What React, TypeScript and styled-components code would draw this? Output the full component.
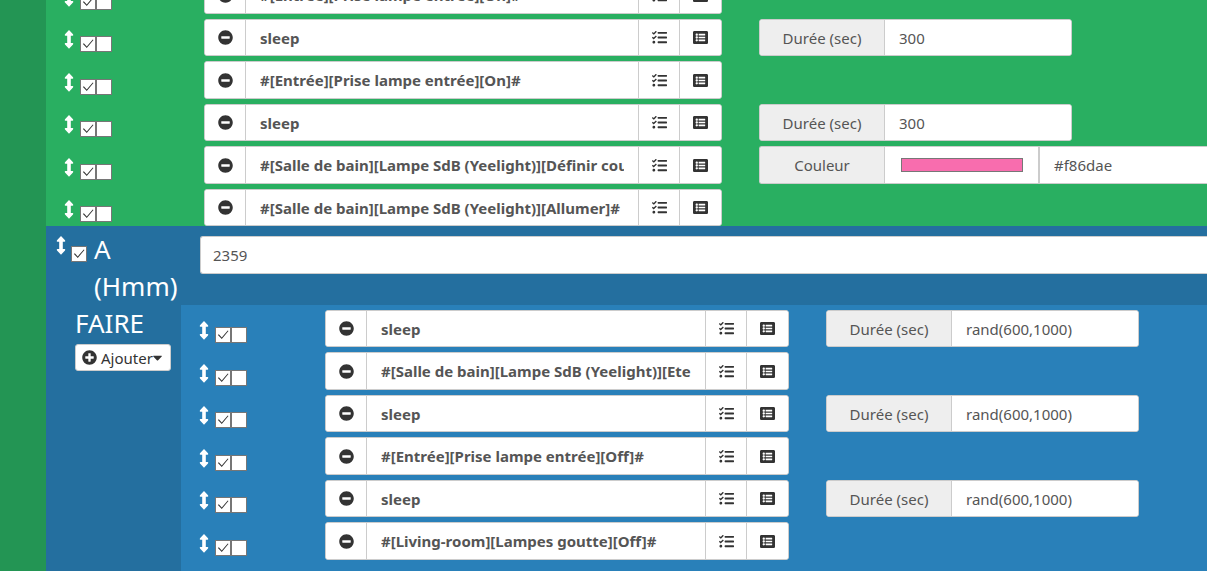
import React from "react";
import styled, { createGlobalStyle, css } from "styled-components";
import { FaCaretDown, FaListAlt, FaMinusCircle, FaPlusCircle, FaTasks } from "react-icons/fa";

const GlobalStyle = createGlobalStyle`
  *, *::before, *::after { box-sizing: border-box; }
  body {
    margin: 0;
    font-family: "Noto Sans", "Open Sans", sans-serif;
    font-size: 15px;
    line-height: 20px;
    color: #555;
  }
  button, input { font: inherit; color: inherit; margin: 0; }
`;

const Page = styled.main`
  display: flex;
  min-height: 100vh;
  padding-left: 46px;
  overflow: hidden;
  background: #239554;
`;

const Scenario = styled.div`
  flex: 1;
  min-width: 0;
  display: flex;
  flex-direction: column;
`;

const ActionList = styled.section<{ $tone: "green" | "blue" }>`
  display: flex;
  flex-direction: column;
  gap: 5px;
  background: ${(p) => (p.$tone === "green" ? "#29af61" : "#2980b9")};
  padding-left: 18px;
  ${(p) =>
    p.$tone === "green"
      ? css`
          margin-top: -24px;
        `
      : css`
          flex: 1;
          min-width: 0;
          padding-top: 5px;
          padding-bottom: 11px;
        `}
`;

const Row = styled.div<{ $tone: "green" | "blue" }>`
  display: grid;
  grid-template-columns: ${(p) =>
    p.$tone === "green"
      ? "103px minmax(0, 518fr) minmax(0, 448fr)"
      : "89px minmax(0, 464fr) minmax(0, 381fr)"};
  column-gap: 37px;
  height: 37px;

  ${(p) => (p.$tone === "green" ? "&:nth-child(odd)" : "&:nth-child(even)")} {
    height: 38px;
  }
`;

const RowControls = styled.div`
  display: flex;
  align-items: flex-end;
  padding-bottom: 4px;
`;

const HandleIcon = styled.svg`
  display: block;
  flex: none;
  width: 10px;
  height: 19px;
  margin-bottom: 3px;
  fill: #fff;
`;

const Checks = styled.div`
  display: flex;
  padding-left: 6px;
`;

const Check = styled.input.attrs({ type: "checkbox" })`
  appearance: none;
  flex: none;
  display: block;
  width: 16px;
  height: 16px;
  border: 1px solid #767676;
  background: #fff;

  &:checked::after {
    content: "";
    display: block;
    width: 14px;
    height: 14px;
    background: #333;
    clip-path: polygon(14% 50%, 20% 45%, 41% 67%, 84% 17%, 89% 22%, 41% 78%);
  }
`;

const Group = styled.div`
  display: flex;
  min-width: 0;
  background: #fff;
  border: 1px solid #ccc;
  border-radius: 3px;
  overflow: hidden;
`;

const IconButton = styled.button`
  flex: none;
  display: flex;
  align-items: center;
  justify-content: center;
  width: 40px;
  padding: 0;
  border: 0;
  background: #fff;
  color: #333;

  & + & {
    width: 42px;
    border-left: 1px solid #ccc;
  }
`;

const CommandInput = styled.input`
  flex: 1;
  min-width: 0;
  padding: 0 14px;
  border: 0;
  border-left: 1px solid #ccc;
  border-right: 1px solid #ccc;
  background: #fff;
  font-weight: 700;
`;

const OptionGroup = styled.div<{ $wide?: boolean }>`
  display: flex;
  min-width: 0;
  width: ${(p) => (p.$wide ? "100%" : "313px")};
  background: #fff;
  border: 1px solid #ccc;
  border-radius: 3px;
  overflow: hidden;
  ${(p) =>
    p.$wide &&
    css`
      border-right: 0;
      border-radius: 3px 0 0 3px;
    `}
`;

const OptionLabel = styled.label`
  flex: none;
  display: flex;
  align-items: center;
  justify-content: center;
  width: 125px;
  background: #eee;
  border-right: 1px solid #ccc;
`;

const OptionInput = styled.input`
  flex: 1;
  min-width: 0;
  padding: 0 14px;
  border: 0;
  background: #fff;
`;

const ColorInput = styled.input.attrs({ type: "color" })`
  appearance: none;
  flex: none;
  width: 155px;
  height: 100%;
  padding: 11px 15px 11px 16px;
  border: 0;
  border-right: 2px solid #ccc;
  background: #fff;

  &::-webkit-color-swatch-wrapper {
    padding: 0;
  }
  &::-webkit-color-swatch {
    height: 12px;
    border: 1px solid #777;
    border-radius: 0;
  }
`;

const Block = styled.section`
  flex: 1;
  display: flex;
  flex-direction: column;
  background: #246f9f;
`;

const BlockHeader = styled.header`
  display: flex;
  align-items: flex-start;
  height: 79px;
  padding: 10px 0 0 10px;
`;

const BlockChecks = styled(Checks)`
  padding: 10px 7px 0 5px;
`;

const BlockTitle = styled.h2`
  flex: none;
  width: 106px;
  margin: -5px 0 0;
  font-size: 26px;
  font-weight: 400;
  line-height: 37px;
  color: #fff;
`;

const TimeInput = styled.input`
  flex: 1;
  min-width: 0;
  height: 38px;
  padding: 0 12px;
  border: 1px solid #ccc;
  border-right: 0;
  border-radius: 3px 0 0 3px;
  background: #fff;
`;

const BlockBody = styled.div`
  flex: 1;
  display: flex;
`;

const Side = styled.div`
  flex: none;
  width: 135px;
  padding-left: 29px;
`;

const SideTitle = styled(BlockTitle)`
  width: auto;
  margin: 0;
  padding-bottom: 2px;
`;

const AddButton = styled.button`
  display: flex;
  align-items: center;
  width: 96px;
  height: 27px;
  padding: 0 6px;
  border: 1px solid #ccc;
  border-radius: 3px;
  background: #fff;
  color: #333;

  svg {
    flex: none;
  }
`;

const AddText = styled.span`
  margin: 0 -3px 0 4px;
`;

type Option = { label: string; value: string; color?: boolean };
type Action = { command: string; option?: Option };

const delay = (value: string): Option => ({ label: "Durée (sec)", value });

const morning: Action[] = [
  { command: "#[Entrée][Prise lampe entrée][On]#" },
  { command: "sleep", option: delay("300") },
  { command: "#[Entrée][Prise lampe entrée][On]#" },
  { command: "sleep", option: delay("300") },
  {
    command: "#[Salle de bain][Lampe SdB (Yeelight)][Définir couleur]#",
    option: { label: "Couleur", value: "#f86dae", color: true },
  },
  { command: "#[Salle de bain][Lampe SdB (Yeelight)][Allumer]#" },
];

const night: Action[] = [
  { command: "sleep", option: delay("rand(600,1000)") },
  { command: "#[Salle de bain][Lampe SdB (Yeelight)][Eteindre]#" },
  { command: "sleep", option: delay("rand(600,1000)") },
  { command: "#[Entrée][Prise lampe entrée][Off]#" },
  { command: "sleep", option: delay("rand(600,1000)") },
  { command: "#[Living-room][Lampes goutte][Off]#" },
];

function Handle() {
  return (
    <HandleIcon viewBox="0 0 10 19" aria-hidden="true">
      <path d="M5 0 L9 4.2 Q9.8 5.6 8.6 5.7 H6.8 V13.1 H8.6 Q9.8 13.2 9 14.6 L5 18.8 L1 14.6 Q0.2 13.2 1.4 13.1 H3.2 V5.7 H1.4 Q0.2 5.6 1 4.2 Z" />
    </HandleIcon>
  );
}

function ActionRow({ action, tone, id }: { action: Action; tone: "green" | "blue"; id: string }) {
  const { command, option } = action;
  return (
    <Row $tone={tone}>
      <RowControls>
        <Handle />
        <Checks>
          <Check defaultChecked aria-label="Activer" />
          <Check aria-label="Exécuter en parallèle" />
        </Checks>
      </RowControls>
      <Group>
        <IconButton type="button" aria-label="Supprimer">
          <FaMinusCircle size={15} />
        </IconButton>
        <CommandInput type="text" defaultValue={command} aria-label="Commande" />
        <IconButton type="button" aria-label="Choisir un mot-clé">
          <FaTasks size={15} />
        </IconButton>
        <IconButton type="button" aria-label="Choisir une commande">
          <FaListAlt size={15} />
        </IconButton>
      </Group>
      {option && (
        <OptionGroup $wide={option.color}>
          <OptionLabel htmlFor={id}>{option.label}</OptionLabel>
          {option.color && <ColorInput defaultValue={option.value} aria-label="Palette" />}
          <OptionInput id={id} type="text" defaultValue={option.value} />
        </OptionGroup>
      )}
    </Row>
  );
}

export default function App() {
  return (
    <>
      <GlobalStyle />
      <Page>
        <Scenario>
          <ActionList $tone="green">
            {morning.map((action, i) => (
              <ActionRow key={i} id={`morning-${i}`} tone="green" action={action} />
            ))}
          </ActionList>
          <Block>
            <BlockHeader>
              <Handle />
              <BlockChecks>
                <Check defaultChecked aria-label="Activer le bloc" />
              </BlockChecks>
              <BlockTitle>
                A<br />
                (Hmm)
              </BlockTitle>
              <TimeInput type="text" defaultValue="2359" aria-label="A (Hmm)" />
            </BlockHeader>
            <BlockBody>
              <Side>
                <SideTitle>FAIRE</SideTitle>
                <AddButton type="button">
                  <FaPlusCircle size={15} />
                  <AddText>Ajouter</AddText>
                  <FaCaretDown size={15} />
                </AddButton>
              </Side>
              <ActionList $tone="blue">
                {night.map((action, i) => (
                  <ActionRow key={i} id={`night-${i}`} tone="blue" action={action} />
                ))}
              </ActionList>
            </BlockBody>
          </Block>
        </Scenario>
      </Page>
    </>
  );
}
